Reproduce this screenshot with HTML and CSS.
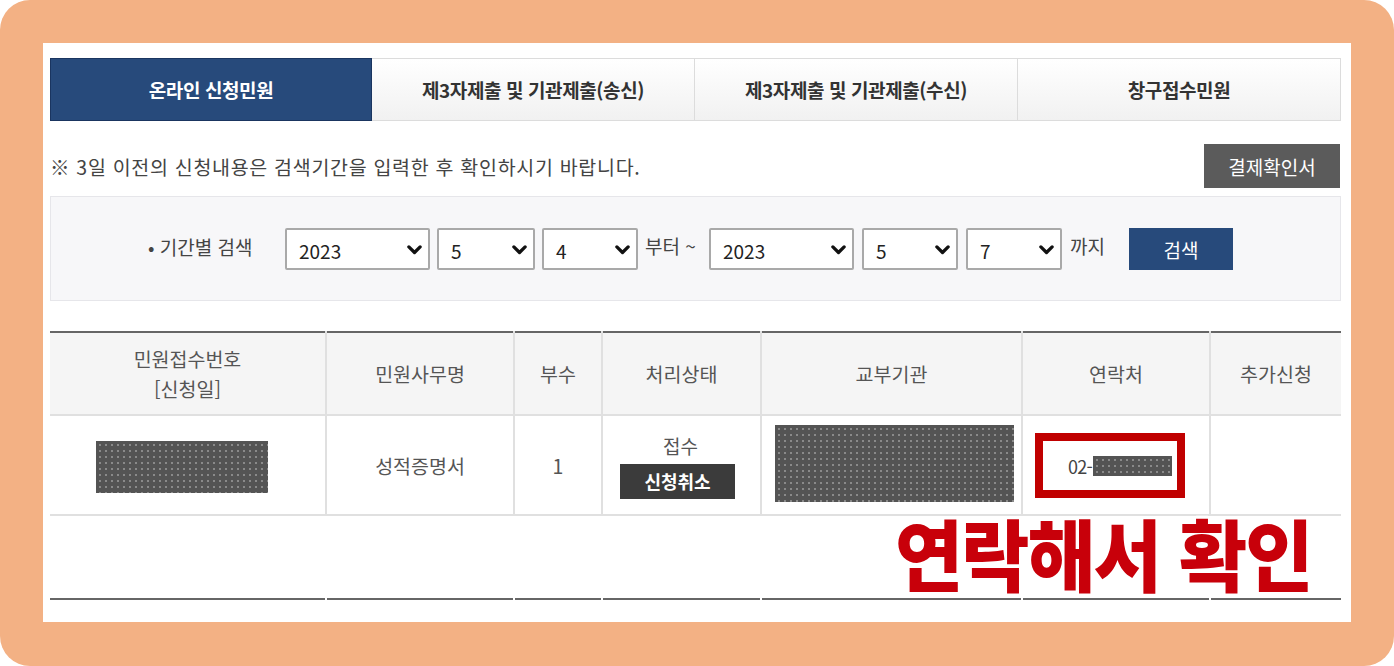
FILE: index.html
```html
<!DOCTYPE html>
<html lang="ko">
<head>
<meta charset="utf-8">
<title>온라인 신청민원</title>
<link rel="stylesheet" href="styles.css">
</head>
<body>
<div class="frame">
  <div class="panel">
    <nav class="tabs">
      <a class="tab active">온라인 신청민원</a>
      <a class="tab">제3자제출 및 기관제출(송신)</a>
      <a class="tab">제3자제출 및 기관제출(수신)</a>
      <a class="tab">창구접수민원</a>
    </nav>

    <div class="notice-row">
      <p class="notice">※ 3일 이전의 신청내용은 검색기간을 입력한 후 확인하시기 바랍니다.</p>
      <button class="btn-grey">결제확인서</button>
    </div>

    <div class="search-box">
      <span class="search-label">• 기간별 검색</span>
      <div class="select w-year"><span>2023</span><svg class="chev" viewBox="0 0 12 8"><path d="M1.5 1.5 L6 6 L10.5 1.5" /></svg></div>
      <div class="select w-mon"><span>5</span><svg class="chev" viewBox="0 0 12 8"><path d="M1.5 1.5 L6 6 L10.5 1.5" /></svg></div>
      <div class="select w-day"><span>4</span><svg class="chev" viewBox="0 0 12 8"><path d="M1.5 1.5 L6 6 L10.5 1.5" /></svg></div>
      <span class="range-text from">부터 ~</span>
      <div class="select w-year2"><span>2023</span><svg class="chev" viewBox="0 0 12 8"><path d="M1.5 1.5 L6 6 L10.5 1.5" /></svg></div>
      <div class="select w-day2"><span>5</span><svg class="chev" viewBox="0 0 12 8"><path d="M1.5 1.5 L6 6 L10.5 1.5" /></svg></div>
      <div class="select w-day3"><span>7</span><svg class="chev" viewBox="0 0 12 8"><path d="M1.5 1.5 L6 6 L10.5 1.5" /></svg></div>
      <span class="range-text until">까지</span>
      <button class="btn-navy">검색</button>
    </div>

    <div class="table-wrap">
      <table class="list">
        <colgroup>
          <col class="c1"><col class="c2"><col class="c3"><col class="c4"><col class="c5"><col class="c6"><col class="c7">
        </colgroup>
        <thead>
          <tr>
            <th>민원접수번호<br>[신청일]</th>
            <th>민원사무명</th>
            <th>부수</th>
            <th>처리상태</th>
            <th>교부기관</th>
            <th>연락처</th>
            <th>추가신청</th>
          </tr>
        </thead>
        <tbody>
          <tr class="data-row">
            <td><span class="redact r-no"></span></td>
            <td>성적증명서</td>
            <td>1</td>
            <td><div class="status">접수</div><button class="btn-dark">신청취소</button></td>
            <td><span class="redact r-org"></span></td>
            <td><span class="phone-box"><span class="phone">02-</span><span class="redact r-phone"></span></span></td>
            <td></td>
          </tr>
          <tr class="empty-row">
            <td></td><td></td><td></td><td></td><td></td><td></td><td></td>
          </tr>
        </tbody>
      </table>
      <div class="callout">연락해서 확인</div>
    </div>
  </div>
</div>
</body>
</html>
```

FILE: styles.css
```css
* { box-sizing: border-box; }

html, body {
  margin: 0;
  padding: 0;
  background: #ffffff;
}

body {
  font-family: "Noto Sans CJK KR", "Noto Sans", sans-serif;
  color: #555;
}

.frame {
  width: 1394px;
  height: 666px;
  background: #f3b184;
  border-radius: 30px;
  padding: 43px 43px 44px 43px;
}

.panel {
  background: #ffffff;
  height: 579px;
  padding: 15px 10px 0 7px;
}

/* tabs */
.tabs {
  display: grid;
  grid-template-columns: 322px 323px 323px 323px;
  height: 63px;
}

.tab {
  display: flex;
  align-items: center;
  justify-content: center;
  font-size: 19px;
  font-weight: 700;
  letter-spacing: -0.4px;
  color: #333;
  background: linear-gradient(#ffffff, #f1f1f1);
  border: 1px solid #dcdcdc;
  border-left: none;
}

.tab.active {
  background: #274a7b;
  color: #ffffff;
  border: 1px solid #1a3560;
}

/* notice */
.notice-row {
  display: flex;
  align-items: center;
  justify-content: space-between;
  margin-top: 23px;
  padding-right: 1px;
}

.notice {
  margin: 0;
  font-size: 19.5px;
  letter-spacing: 0.7px;
  color: #444;
}

.btn-grey {
  width: 136px;
  height: 44px;
  border: none;
  background: #5b5b5b;
  color: #fff;
  font-family: inherit;
  font-size: 19px;
  padding: 0;
}

/* search box */
.search-box {
  margin-top: 8px;
  height: 105px;
  background: #f7f7f9;
  border: 1px solid #e6e6ea;
  display: flex;
  align-items: center;
  padding-left: 97px;
  padding-top: 1px;
}

.search-label {
  width: 137px;
  font-size: 19px;
  color: #444;
  margin-top: -6px;
  white-space: nowrap;
}

.select {
  height: 42px;
  background: #fff;
  border: 2px solid #a9a9a9;
  border-radius: 2px;
  display: flex;
  align-items: center;
  justify-content: space-between;
  padding: 2px 6px 0 12px;
  font-size: 19px;
  color: #222;
}

.w-year { width: 145px; margin-right: 7px; }
.w-mon { width: 98px; margin-right: 7px; }
.w-day { width: 96px; }
.w-year2 { width: 145px; margin-right: 8px; }
.w-day2 { width: 96px; margin-right: 8px; }
.w-day3 { width: 96px; }

.chev {
  width: 15px;
  height: 10px;
  fill: none;
  stroke: #111;
  stroke-width: 2.6;
  stroke-linecap: round;
  stroke-linejoin: round;
}

.range-text {
  font-size: 19px;
  color: #444;
  margin-top: -8px;
  white-space: nowrap;
}

.range-text.from {
  width: 71px;
  padding-left: 7px;
}

.range-text.until {
  width: 67px;
  padding-left: 8px;
}

.btn-navy {
  width: 104px;
  height: 42px;
  border: none;
  background: #274a7b;
  color: #fff;
  font-family: inherit;
  font-size: 19px;
  padding: 0;
}

/* table */
.table-wrap {
  position: relative;
  margin-top: 30px;
}

.list {
  width: 1291px;
  border-collapse: collapse;
  table-layout: fixed;
  border-top: 2px solid #666;
  border-bottom: 2px solid #666;
}

.c1 { width: 276px; }
.c2 { width: 188px; }
.c3 { width: 88px; }
.c4 { width: 159px; }
.c5 { width: 261px; }
.c6 { width: 188px; }
.c7 { width: 131px; }

.list th {
  height: 83px;
  background: #f5f5f5;
  font-weight: 400;
  font-size: 19.5px;
  line-height: 30px;
  color: #555;
  border-left: 2px solid #e0e0e0;
  border-bottom: 2px solid #e0e0e0;
  padding: 0;
}

.list td {
  text-align: center;
  font-size: 19.5px;
  color: #555;
  border-left: 2px solid #e0e0e0;
  padding: 0;
}

.list th:first-child,
.list td:first-child { border-left: none; }

.data-row td {
  height: 100px;
  border-bottom: 2px solid #e0e0e0;
}

.empty-row td {
  height: 84px;
  border-left-color: transparent;
}

.redact {
  display: inline-block;
  vertical-align: middle;
  background-color: #545454;
  background-image: radial-gradient(circle, #8a8a8a 0.8px, transparent 1.2px);
  background-size: 6px 6px;
  background-position: 1px 1px;
}

.r-no { width: 172px; height: 52px; margin-left: -12px; margin-top: 4px; }
.r-org { width: 239px; height: 77px; margin-left: 5px; margin-top: -4px; }
.r-phone { width: 79px; height: 20px; margin-left: 1px; }

.status {
  font-size: 19px;
  line-height: 24px;
  margin-top: 2px;
  margin-right: 2px;
}

.btn-dark {
  margin-top: 6px;
  margin-right: 8px;
  width: 115px;
  height: 35px;
  border: none;
  background: #3b3b3b;
  color: #fff;
  font-family: inherit;
  font-weight: 700;
  font-size: 18px;
  padding: 0;
}

.phone-box {
  display: inline-flex;
  align-items: center;
  width: 150px;
  height: 65px;
  border: 8px solid #c00000;
  padding-left: 25px;
  padding-top: 2px;
  margin-left: -12px;
}

.phone {
  font-size: 18px;
  letter-spacing: -0.8px;
  color: #444;
}

.callout {
  position: absolute;
  left: 845px;
  top: 182px;
  font-size: 78px;
  font-weight: 900;
  line-height: 1;
  color: #c8000a;
  letter-spacing: -2px;
  transform: scaleX(0.95);
  transform-origin: left top;
  white-space: nowrap;
  text-shadow: 0 -3px 0 #fff, 3px 0 0 #fff, -3px 0 0 #fff, 0 3px 0 #fff;
}
```
